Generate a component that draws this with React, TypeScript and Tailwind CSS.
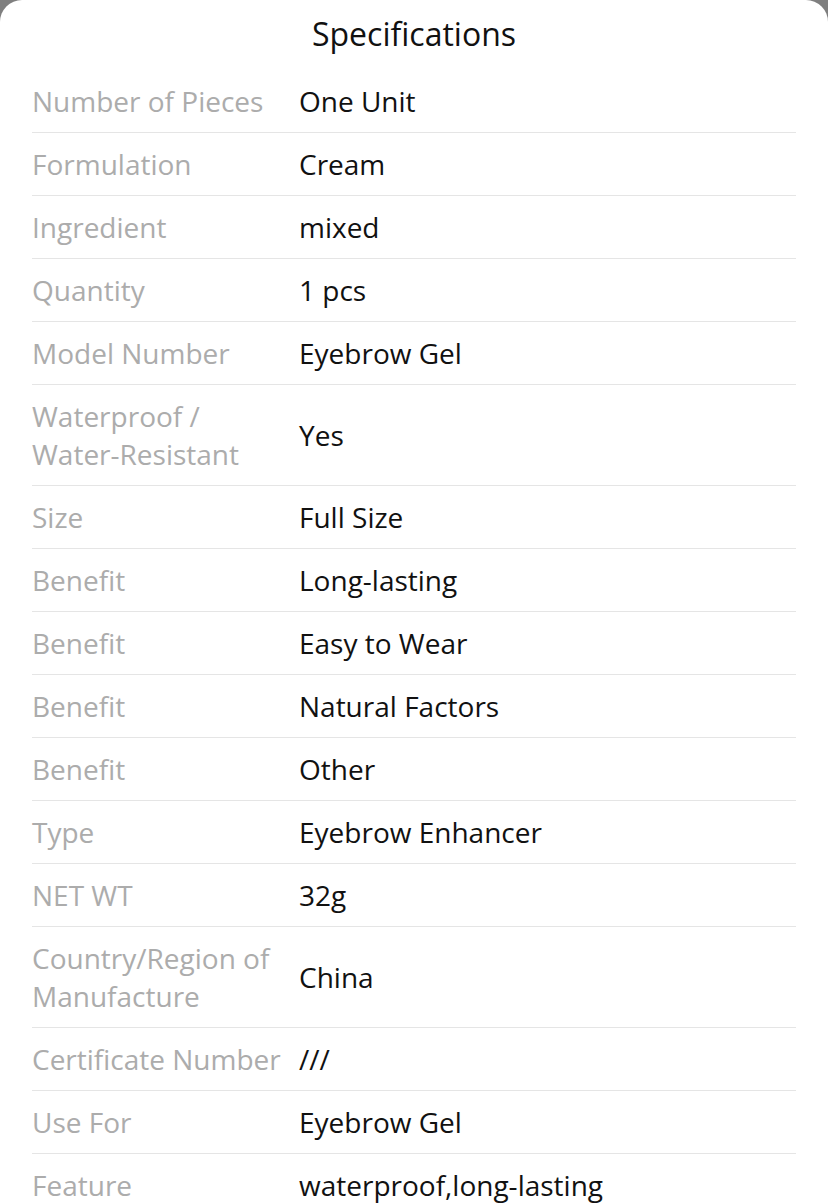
import React from "react";

const rows: [string, string][] = [
  ["Number of Pieces", "One Unit"],
  ["Formulation", "Cream"],
  ["Ingredient", "mixed"],
  ["Quantity", "1 pcs"],
  ["Model Number", "Eyebrow Gel"],
  ["Waterproof / Water-Resistant", "Yes"],
  ["Size", "Full Size"],
  ["Benefit", "Long-lasting"],
  ["Benefit", "Easy to Wear"],
  ["Benefit", "Natural Factors"],
  ["Benefit", "Other"],
  ["Type", "Eyebrow Enhancer"],
  ["NET WT", "32g"],
  ["Country/Region of Manufacture", "China"],
  ["Certificate Number", "///"],
  ["Use For", "Eyebrow Gel"],
  ["Feature", "waterproof,long-lasting"],
];

export default function App() {
  return (
    <div
      className="w-[828px] h-[1204px] overflow-hidden bg-[#7f7f7f]"
      style={{ fontFamily: '"Open Sans", "Noto Sans", sans-serif' }}
    >
      <div className="bg-white rounded-t-[22px] h-full">
        <div className="h-[70px] pt-[13px] text-center text-[32px] leading-[42px] text-[#111]">
          Specifications
        </div>
        <div className="px-8">
          {rows.map(([k, v], i) => (
            <div
              key={i}
              className="flex items-center border-b border-[#e5e5e5] py-3"
            >
              <div className="w-[267px] shrink-0 pr-[14px] text-[28px] leading-[38px] text-[#acacac]">
                {k}
              </div>
              <div className="flex-1 text-[28px] leading-[38px] text-[#111]">
                {v}
              </div>
            </div>
          ))}
        </div>
      </div>
    </div>
  );
}
